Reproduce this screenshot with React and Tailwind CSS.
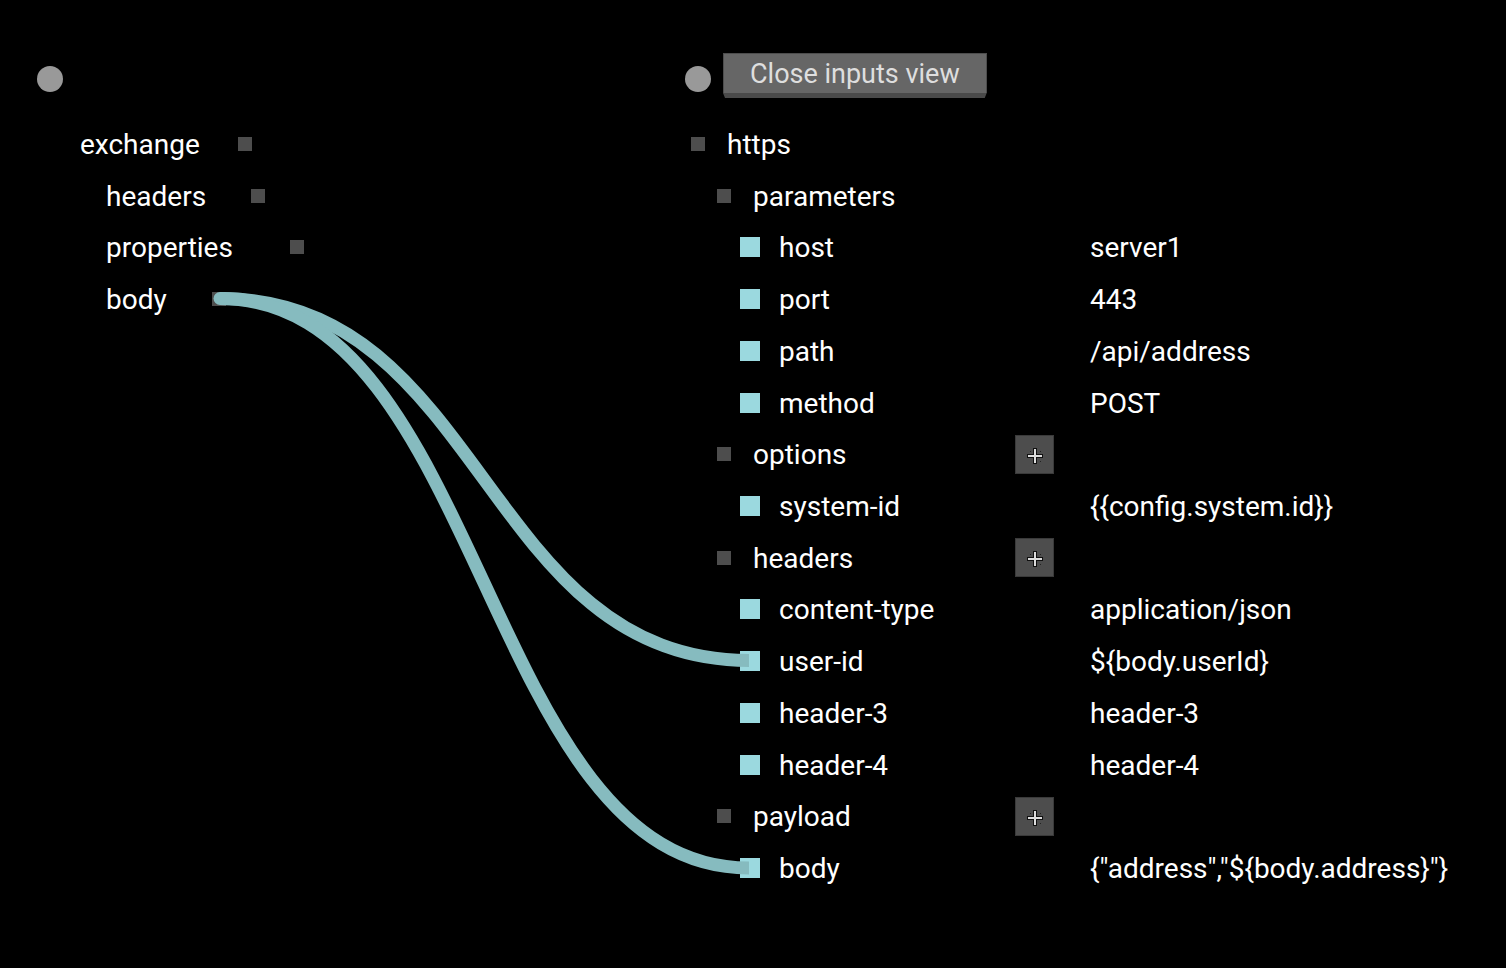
const sources = [
  { name: "exchange", indent: "pl-[43px]", width: "w-[158px]" },
  { name: "headers", indent: "pl-[69px]", width: "w-[145px]" },
  { name: "properties", indent: "pl-[69px]", width: "w-[184px]" },
  { name: "body", indent: "pl-[69px]", width: "w-[106px]" },
];

const targets = [
  { name: "https", depth: 0 },
  { name: "parameters", depth: 1 },
  { name: "host", depth: 2, value: "server1" },
  { name: "port", depth: 2, value: "443" },
  { name: "path", depth: 2, value: "/api/address" },
  { name: "method", depth: 2, value: "POST" },
  { name: "options", depth: 1, addable: true },
  { name: "system-id", depth: 2, value: "{{config.system.id}}" },
  { name: "headers", depth: 1, addable: true },
  { name: "content-type", depth: 2, value: "application/json" },
  { name: "user-id", depth: 2, value: "${body.userId}" },
  { name: "header-3", depth: 2, value: "header-3" },
  { name: "header-4", depth: 2, value: "header-4" },
  { name: "payload", depth: 1, addable: true },
  { name: "body", depth: 2, value: '{"address","${body.address}"}' },
];

const indents = ["pl-[3px]", "pl-[29px]", "pl-[55px]"];

function Handle() {
  return <span className="size-[26px] shrink-0 rounded-full bg-[#999999]" />;
}

function SourceRow({ item }) {
  return (
    <li className={`flex items-center ${item.indent}`}>
      <span className={`shrink-0 pt-0.5 ${item.width}`}>{item.name}</span>
      <span className="size-3.5 shrink-0 bg-[#4d4d4d]" />
    </li>
  );
}

function AddButton({ name }) {
  return (
    <button
      type="button"
      aria-label={`Add to ${name}`}
      className="flex size-[39px] items-center justify-center border border-[#3a3a3a] bg-[#4d4d4d]"
    >
      <svg width="21" height="21" viewBox="0 0 21 21" aria-hidden="true">
        <path d="M11 4v16M3 12h16" stroke="#101010" strokeWidth="4" />
        <path d="M11 5v14M4 12h14" stroke="#dcdcdc" strokeWidth="2" />
        <path d="M6 7h1v1h-1zM16 7h1v1h-1zM16 17h1v1h-1z" fill="#222222" />
      </svg>
    </button>
  );
}

function TargetRow({ item }) {
  return (
    <li className="grid grid-cols-[330px_75px_1fr] items-center">
      <div className={`flex items-center gap-[19px] ${indents[item.depth]}`}>
        <span className="flex size-5 shrink-0 items-center justify-center">
          <span className={item.depth === 2 ? "size-5 bg-[#9bd9df]" : "size-3.5 bg-[#4d4d4d]"} />
        </span>
        <span className="pt-0.5">{item.name}</span>
      </div>
      <div>{item.addable && <AddButton name={item.name} />}</div>
      <span className="pt-0.5 whitespace-nowrap">{item.value}</span>
    </li>
  );
}

function Links() {
  return (
    <svg
      className="pointer-events-none absolute top-0 left-0"
      width="760"
      height="900"
      viewBox="0 0 760 900"
      fill="none"
      stroke="#86bbbf"
      strokeWidth="13"
      aria-hidden="true"
    >
      <path d="M220 298.5C484 298.5 484 660.5 749 660.5" />
      <path d="M220 298.5C484 298.5 484 868 749 868" />
      <path d="M220 298.5h.01" strokeLinecap="round" />
    </svg>
  );
}

export default function App() {
  return (
    <main className="relative flex min-h-screen bg-black pt-[53px] pl-[37px] font-['Roboto',sans-serif] text-[28px] leading-8 text-white">
      <section className="w-[648px] shrink-0" aria-label="Sources">
        <header className="mb-[13px] flex h-[52px] items-center">
          <Handle />
        </header>
        <ul className="grid min-h-[776px] grid-rows-[repeat(15,1fr)]">
          {sources.map((item) => (
            <SourceRow key={item.name} item={item} />
          ))}
        </ul>
      </section>
      <section className="grow" aria-label="Inputs">
        <header className="mb-[13px] flex h-[52px] items-center gap-3">
          <Handle />
          <button type="button" className="self-start text-[27px] text-[#dedede]">
            <span className="block border border-b-0 border-[#4d4d4d] bg-[#666666] px-[26px] pt-1 pb-[3px]">Close inputs view</span>
            <svg className="block h-[5px] w-full" viewBox="0 0 263 5" preserveAspectRatio="none" aria-hidden="true">
              <path d="M0 0h263l-2 5H2z" fill="#4a4a4a" />
            </svg>
          </button>
        </header>
        <ul className="grid min-h-[776px] grid-rows-[repeat(15,1fr)]">
          {targets.map((item, i) => (
            <TargetRow key={i} item={item} />
          ))}
        </ul>
      </section>
      <Links />
    </main>
  );
}
